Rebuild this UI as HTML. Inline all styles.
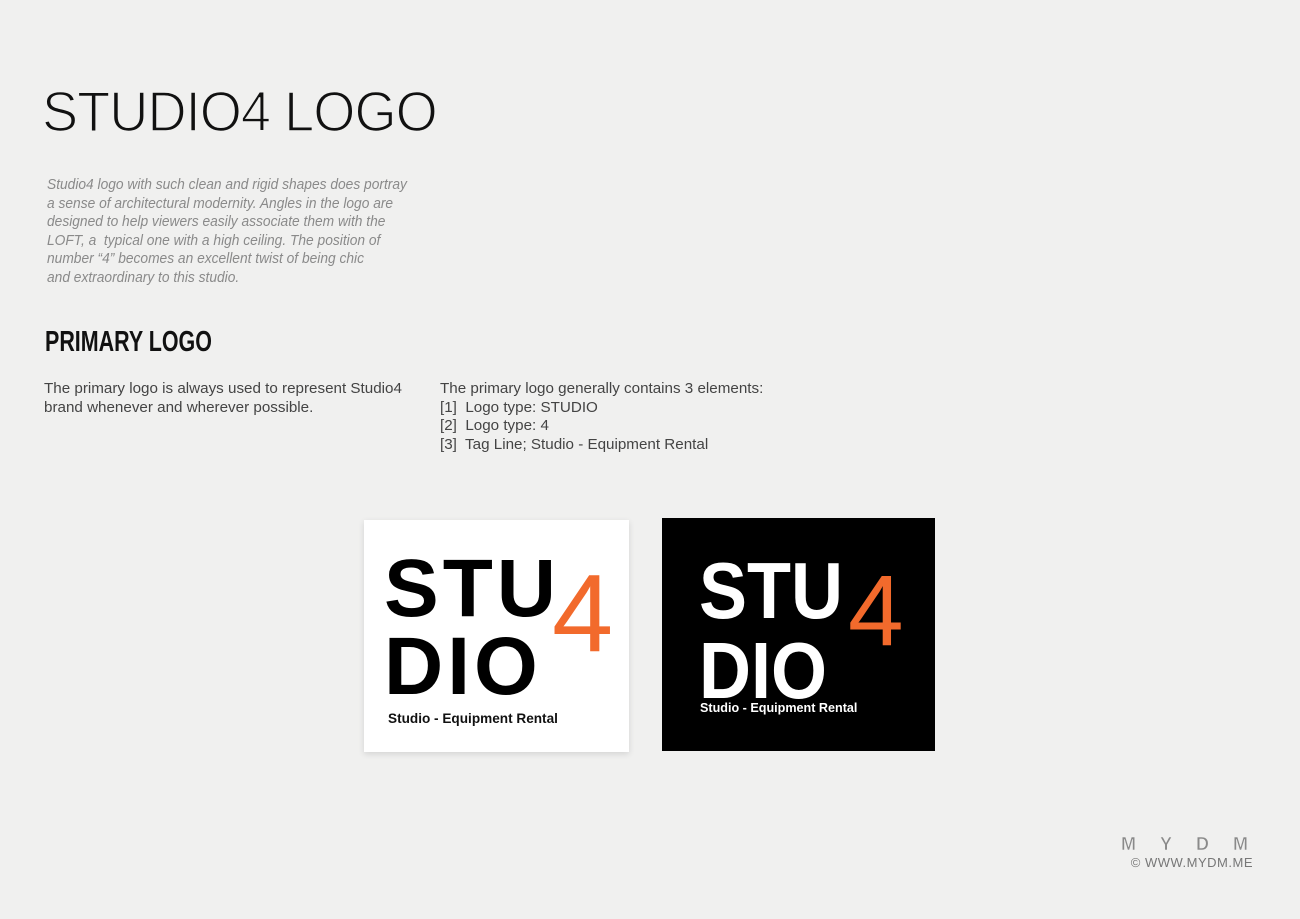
<!DOCTYPE html>
<html><head><meta charset="utf-8"><style>
html,body{margin:0;padding:0}
body{width:1300px;height:919px;background:#f0f0ef;position:relative;overflow:hidden;font-family:"Liberation Sans",Arial,sans-serif}
.a{position:absolute;white-space:nowrap}
.title{left:42px;top:79px;font-size:57px;color:#111;transform:scaleX(0.95);transform-origin:0 0;-webkit-text-stroke:1.6px #f0f0ef;letter-spacing:-1px}
.it{left:47px;top:176px;font-size:14.5px;font-style:italic;color:#8a8a8a;line-height:18.5px;transform:scaleX(0.95);transform-origin:0 0}
.h2{left:45px;top:326px;font-size:29px;font-weight:bold;color:#111;transform:scaleX(0.74);transform-origin:0 0}
.body{font-size:15.2px;color:#444;line-height:18.5px}
.box{position:absolute}
.lg{position:absolute;font-weight:bold;font-size:82px;line-height:1;transform-origin:0 0}
.tag{position:absolute;font-weight:bold;white-space:nowrap}
.mydm{right:28px;top:834px;font-size:18px;font-weight:bold;color:#8a8a8a;letter-spacing:24px;-webkit-text-stroke:0.6px #f0f0ef}
.url{right:47px;top:855px;font-size:13px;color:#777;letter-spacing:0.5px}
</style></head><body>
<div class="a title">STUDIO4 LOGO</div>
<div class="a it">Studio4 logo with such clean and rigid shapes does portray<br>a sense of architectural modernity. Angles in the logo are<br>designed to help viewers easily associate them with the<br>LOFT, a&nbsp; typical one with a high ceiling. The position of<br>number “4” becomes an excellent twist of being chic<br>and extraordinary to this studio.</div>
<div class="a h2">PRIMARY LOGO</div>
<div class="a body" style="left:44px;top:380px">The primary logo is always used to represent Studio4<br>brand whenever and wherever possible.</div>
<div class="a body" style="left:440px;top:380px">The primary logo generally contains 3 elements:<br>[1]&nbsp; Logo type: STUDIO<br>[2]&nbsp; Logo type: 4<br>[3]&nbsp; Tag Line; Studio - Equipment Rental</div>

<div class="box" style="left:364px;top:520px;width:265px;height:232px;background:#fff;box-shadow:0 2px 6px rgba(0,0,0,0.12)">
 <div class="lg" style="left:20px;top:28px;color:#000;letter-spacing:4px">STU</div>
 <div class="lg" style="left:20px;top:106px;color:#000;letter-spacing:4px">DIO</div>
 <div class="lg" style="left:188px;top:39px;color:#f26a2c;font-size:110px;font-weight:normal">4</div>
 <div class="tag" style="left:24px;top:191px;color:#111;font-size:13.6px">Studio - Equipment Rental</div>
</div>
<div class="box" style="left:662px;top:518px;width:273px;height:233px;background:#000">
 <div class="lg" style="left:37px;top:33px;color:#fff;font-size:80px;transform:scaleX(0.9)">STU</div>
 <div class="lg" style="left:37px;top:113px;color:#fff;font-size:80px;transform:scaleX(0.9)">DIO</div>
 <div class="lg" style="left:186px;top:43px;color:#f26a2c;font-size:100px;font-weight:normal">4</div>
 <div class="tag" style="left:38px;top:183px;color:#fff;font-size:12.6px">Studio - Equipment Rental</div>
</div>

<div class="a mydm">MYDM</div>
<div class="a url">© WWW.MYDM.ME</div>
</body></html>
